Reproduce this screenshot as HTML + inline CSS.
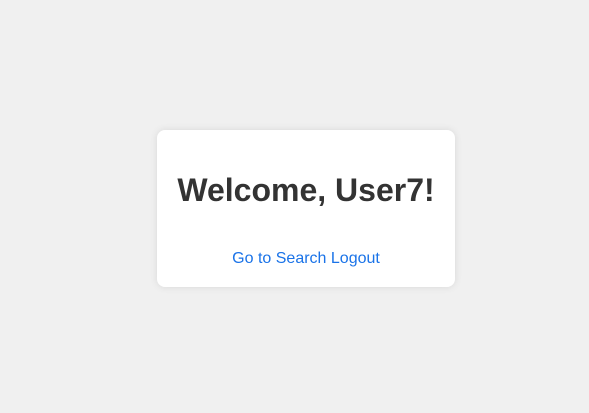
<!DOCTYPE html>
<html><head><style>
html,body{margin:0;height:413px;background:#f0f0f0;font-family:"Liberation Sans",Arial,sans-serif;}
.card{position:absolute;left:157px;top:130px;width:298px;height:157px;background:#fff;border-radius:8px;box-shadow:0 0 8px rgba(0,0,0,0.1);text-align:center;}
h1{margin:0;position:absolute;top:41px;left:0;right:0;font-size:32px;line-height:38px;color:#333;font-weight:bold;}
.links{position:absolute;top:120px;left:0;right:0;font-size:16px;line-height:18px;color:#1a73e8;}
</style></head><body>
<div class="card"><h1>Welcome, User7!</h1><div class="links">Go to Search Logout</div></div>
</body></html>
